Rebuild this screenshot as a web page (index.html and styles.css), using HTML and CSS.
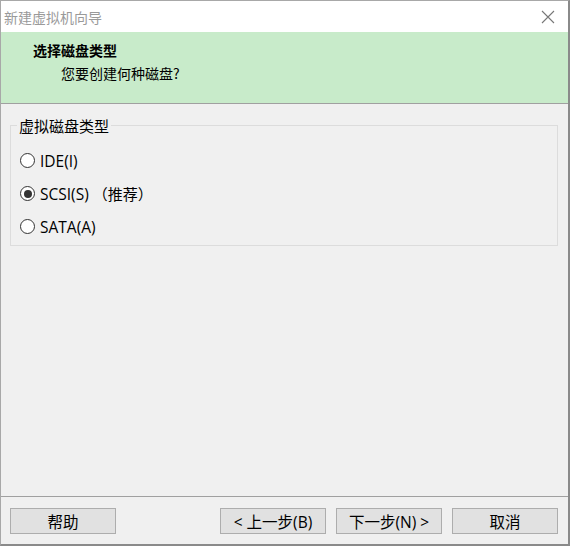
FILE: index.html
```html
<!DOCTYPE html>
<html>
<head>
<meta charset="utf-8">
<link rel="stylesheet" href="styles.css">
</head>
<body>
<div class="window">
  <div class="titlebar">
    <span class="title">新建虚拟机向导</span>
    <svg class="close" width="14" height="14" viewBox="0 0 14 14"><path d="M1 1L13 13M13 1L1 13" stroke="#777" stroke-width="1.1" fill="none"/></svg>
  </div>
  <div class="header">
    <div class="h-title">选择磁盘类型</div>
    <div class="h-sub">您要创建何种磁盘?</div>
  </div>
  <div class="body">
    <fieldset class="group">
      <legend>虚拟磁盘类型</legend>
      <div class="opt"><span class="radio"></span><span>IDE(I)</span></div>
      <div class="opt"><span class="radio on"></span><span>SCSI(S)</span><span class="rec">（推荐）</span></div>
      <div class="opt"><span class="radio"></span><span>SATA(A)</span></div>
    </fieldset>
  </div>
  <div class="footer">
    <div class="btn">帮助</div>
    <div class="spacer"></div>
    <div class="btn">&lt; 上一步(B)</div>
    <div class="btn">下一步(N) &gt;</div>
    <div class="btn">取消</div>
  </div>
</div>
</body>
</html>
```
FILE: styles.css
```css
html, body { margin: 0; padding: 0; }
body { width: 570px; height: 546px; background: #f0f0f0; font-family: "Open Sans", "Noto Sans CJK SC", sans-serif; overflow: hidden; }
.window { box-sizing: border-box; width: 570px; height: 546px; border: 1px solid #a8a8a8; border-right: 2px solid #8a8a8a; border-bottom: 2px solid #8a8a8a; display: flex; flex-direction: column; background: #f0f0f0; }
.titlebar { height: 31px; background: #fff; display: flex; align-items: center; justify-content: space-between; padding: 0 13px 0 3px; }
.title { font-family: "Noto Sans CJK SC", sans-serif; font-size: 14px; color: #9a9a9a; }
.close { display: block; }
.header { height: 72px; background: #c8ebca; border-bottom: 1px solid #a0a0a0; box-sizing: border-box; padding: 8px 0 0 32px; font-family: "Noto Sans CJK SC", sans-serif; color: #000; }
.h-title { font-size: 14px; font-weight: bold; line-height: 20px; }
.h-sub { font-size: 14px; line-height: 20px; margin: 3px 0 0 28px; }
.body { flex: 1; padding: 11px 10px 0 9px; }
.group { margin: 0; border: 1px solid #dcdcdc; padding: 8px 0 6px 9px; height: 131px; box-sizing: border-box; }
.group legend { font-family: "Noto Sans CJK SC", sans-serif; font-size: 15px; color: #000; padding: 0 2px; margin-left: -3px; }
.opt { display: flex; align-items: center; height: 33px; font-size: 15.5px; color: #000; }
.radio { width: 13px; height: 13px; border: 1px solid #333; border-radius: 50%; background: #fff; margin-right: 5px; position: relative; box-sizing: content-box; }
.radio.on::after { content: ""; position: absolute; left: 2.5px; top: 2.5px; width: 8px; height: 8px; border-radius: 50%; background: #333; }
.rec { font-family: "Noto Sans CJK SC", sans-serif; font-size: 15px; margin-left: 4px; }
.footer { height: 48px; box-sizing: border-box; border-top: 1px solid #a0a0a0; display: flex; align-items: flex-start; padding: 11px 10px 0 9px; gap: 10px; }
.spacer { flex: 1; }
.btn { width: 104px; height: 24px; background: #e1e1e1; border: 1px solid #adadad; display: flex; align-items: center; justify-content: center; font-size: 15.5px; font-family: "Open Sans", "Noto Sans CJK SC", sans-serif; color: #000; }
```
